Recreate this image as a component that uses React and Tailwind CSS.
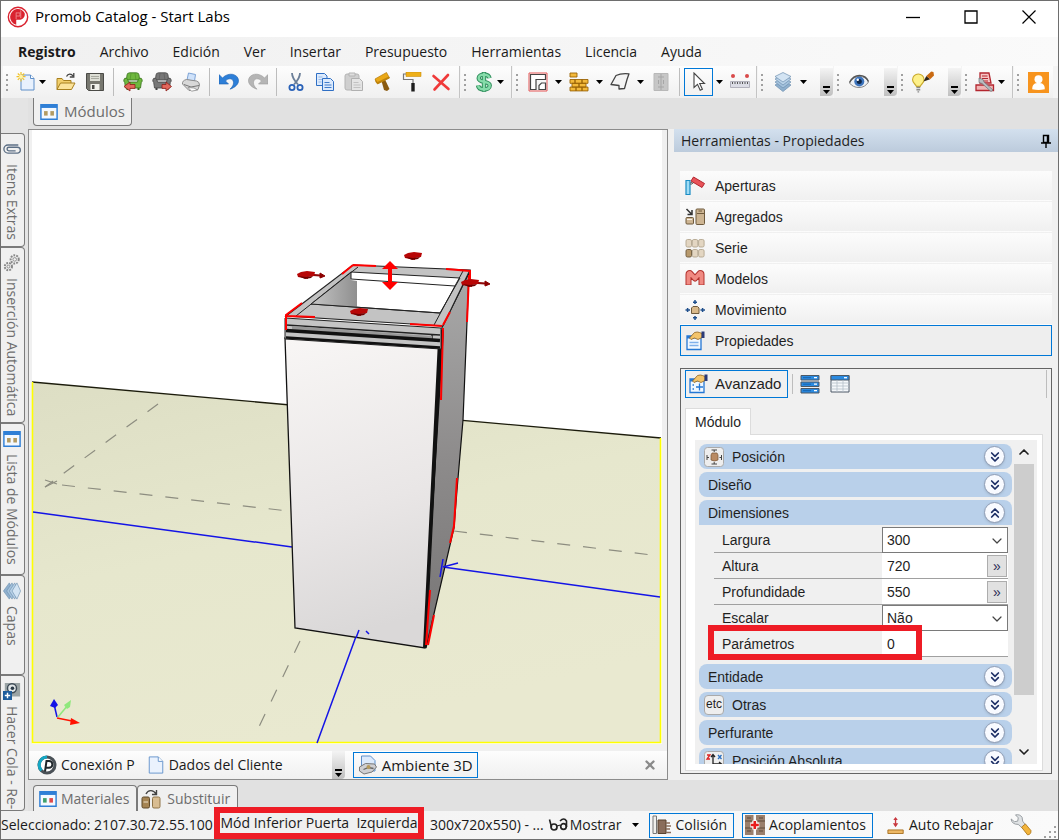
import React, { useState } from 'react';
import { ChevronDown, ChevronUp, ChevronsDown, ChevronsUp, X } from 'lucide-react';

const MENU = ['Archivo', 'Edición', 'Ver', 'Insertar', 'Presupuesto', 'Herramientas', 'Licencia', 'Ayuda'];

const Svg = ({ children, className = 'w-5 h-5' }) => (
  <svg viewBox="0 0 20 20" className={`${className} shrink-0`} fill="none" aria-hidden="true">{children}</svg>
);

/* ---------- toolbar icons ---------- */

const PromobLogo = () => (
  <Svg className="w-[22px] h-[22px]">
    <circle cx="10" cy="10" r="8.800" stroke="#d9222f" strokeWidth="1.300" fill="#fff" />
    <path d="M9 2.800a7.300 7.300 0 0 0-.6 14.300V12.500H10c5 .3 6.800-3.500 6-6.200A7.400 7.400 0 0 0 9 2.800Z" fill="#d9222f" />
    <path d="M8.300 6v6M8.300 6.300h3.500v2.800H8.300M12.500 4v7" stroke="#ee8a90" strokeWidth=".8" />
  </Svg>
);

const NewIcon = () => (
  <Svg>
    <path d="M5 3h9.500L18 6.500V18H5Z" fill="#e8f1fd" stroke="#5f8fc9" />
    <path d="M14.500 3v3.500H18" fill="#fff" stroke="#5f8fc9" />
    <path d="M5 0v9.500M.5 4.700h9M1.800 1.500l6.400 6.400M8.200 1.500 1.800 7.900" stroke="#f0c22c" strokeWidth="1.200" />
    <circle cx="5" cy="4.700" r="2" fill="#fff3a8" />
  </Svg>
);

const OpenIcon = () => (
  <Svg>
    <path d="M1 17.500V6.500h5l1.500 2H15v3" fill="#f2cf6c" stroke="#a8801e" />
    <path d="M1 17.500 4.500 11H19l-3.500 6.500Z" fill="#fbe39a" stroke="#a8801e" />
    <path d="M10.500 4.500c1.500-3 5-3 6.500-.5M17.800 1v4h-4" stroke="#444" strokeWidth="1.300" />
  </Svg>
);

const SaveIcon = () => (
  <Svg>
    <path d="M1.500 1.500h17v17h-15l-2-2Z" fill="#77776f" stroke="#4b4b47" />
    <path d="M5 2h10v7H5Z" fill="#dedfd6" />
    <path d="M6 4.500h8M6 6.500h8" stroke="#a9aaa0" />
    <path d="M5.500 12h9v6h-9Z" fill="#f1f1ec" />
    <path d="M7 13h2.500v4H7Z" fill="#4b4b47" />
  </Svg>
);

const ArmchairIcon = ({ body, dark, flip }) => (
  <Svg>
    <path d="M4 3Q4 1 6.500.8h7Q16 1 16 3l.6 5H3.400Z" fill={body} stroke={dark} strokeWidth=".8" />
    <path d="M.8 8q.4-2.300 2.600-1.800Q5 6.500 5.500 10h9q.5-3.500 2.100-3.800Q18.800 5.700 19.200 8q.2 1.500-.9 2.500L17.500 16h-15l-.8-5.500Q.6 9.500.8 8Z" fill={body} stroke={dark} strokeWidth=".8" />
    <path d="M8 1.500 7 8M12 1.500l1 6.500" stroke={dark} strokeWidth=".6" opacity=".6" />
    <path d="M3.500 16h2v2h-2ZM14.500 16h2v2h-2Z" fill={dark} />
    {flip
      ? <path d="M10 12.500h4V10l5.500 4.500-5.500 4.500v-2.600h-4Z" fill="#e2675c" stroke="#8e1f19" strokeWidth=".8" />
      : <path d="M12 12.500H7V10l-6 4.500L7 19v-2.600h5Z" fill="#e2675c" stroke="#8e1f19" strokeWidth=".8" />}
  </Svg>
);

const PrintIcon = () => (
  <Svg>
    <path d="m6 8 1.500-7 7 1.500L13.500 9Z" fill="#cfe2fa" stroke="#7ea4d6" />
    <path d="M1.500 12q-.5-3.500 4-4.500l10 1.500q3 .8 3 4l-1.500 4.500-9 1Z" fill="#d8d8d8" stroke="#8b8b8b" />
    <path d="M3 12.500 10 15l8-1.500" stroke="#777" />
    <path d="m7 15.500 6 .5 3.500 2-6 1.200Z" fill="#fff" stroke="#8b8b8b" strokeWidth=".8" />
  </Svg>
);

const UndoIcon = ({ redo }) => (
  <Svg>
    <g transform={redo ? 'matrix(-1 0 0 1 20 0)' : undefined}>
      <path d="M0 2.500v9.500h9.500L6.500 9c2.500-3.200 7.500-3 8 1.200.3 2.600-1.200 4.800-3.500 7 5-1.700 8.800-5 8.500-9C19 2 9.500-.5 3.500 6Z" fill={redo ? '#b5b5b5' : '#2d7fd8'} stroke={redo ? '#9b9b9b' : '#1c5fae'} strokeWidth=".6" />
    </g>
  </Svg>
);

const CutIcon = () => (
  <Svg>
    <path d="M6 1q0 5 6 11.500M14 1q0 5-6 11.500" stroke="#6b7f99" strokeWidth="1.800" />
    <circle cx="6" cy="15.500" r="2.600" stroke="#2a62b8" strokeWidth="1.800" />
    <circle cx="14" cy="15.500" r="2.600" stroke="#2a62b8" strokeWidth="1.800" />
  </Svg>
);

const CopyIcon = () => (
  <Svg>
    <path d="M1.500 1.500h8l2.500 2.500v9.500H1.500Z" fill="#dceafc" stroke="#2f6fc4" />
    <path d="M3.500 5h4M3.500 7.500h4M3.500 10h3" stroke="#8db4e6" strokeWidth=".9" />
    <path d="M7.500 6.500h8L18.500 9.500v9h-11Z" fill="#dceafc" stroke="#2f6fc4" />
    <path d="M9.500 10.500h5M9.500 13h7M9.500 15.500h7" stroke="#2f6fc4" strokeWidth=".9" />
  </Svg>
);

const PasteIcon = () => (
  <Svg>
    <rect x="1" y="2" width="14" height="16" rx="2" fill="#cfcfcf" stroke="#b4b4b4" />
    <path d="M5 1h6v3H5Z" fill="#dedede" stroke="#b4b4b4" />
    <path d="M7.500 6.500h8L18.500 9.500v9h-11Z" fill="#e4e4e4" stroke="#b0b0b0" />
    <path d="M9.500 10.500h5M9.500 13h7M9.500 15.500h7" stroke="#bcbcbc" strokeWidth=".9" />
  </Svg>
);

const HammerIcon = () => (
  <Svg>
    <path d="m8.500 9 3.500-1.500 4.500 9.500-2.500 2-3-1Z" fill="#8a5a10" />
    <path d="M2 7 13.500.5l3 5.500-12 6Z" fill="#eaa816" stroke="#b67b0a" strokeWidth=".7" />
    <path d="m2 7 .5 3 2 2 12-6-.5-1.500L4.500 10Z" fill="#bd820c" />
  </Svg>
);

const RollerIcon = () => (
  <Svg>
    <path d="M4 0h15v4.500H4Z" fill="#eeb01a" stroke="#c98d0c" strokeWidth=".6" />
    <path d="M4 2H1.500v5.500H11V11" stroke="#777" strokeWidth="1.200" />
    <path d="M9.300 11h3.400v8.500H9.300Z" fill="#1c1c1c" />
  </Svg>
);

const DeleteIcon = () => (
  <Svg>
    <path d="m2.500 4 15 13M17 3 3.500 17.500" stroke="#f03a3a" strokeWidth="2.600" strokeLinecap="round" />
  </Svg>
);

const MoneyIcon = () => (
  <Svg className="w-[22px] h-[22px]">
    <path d="M15 6.500C14.500 3.800 12.500 3.300 10 3.300 7.300 3.300 5.200 4.500 5.200 6.600c0 4.600 10 2 10 6.500 0 2.300-2.300 3.600-5.200 3.600-2.700 0-5-.7-5.400-3.600M10 1v18" stroke="#2f8d5b" strokeWidth="4" strokeLinejoin="round" />
    <path d="M15 6.500C14.500 3.800 12.500 3.300 10 3.300 7.300 3.300 5.200 4.500 5.200 6.600c0 4.600 10 2 10 6.500 0 2.300-2.300 3.600-5.200 3.600-2.700 0-5-.7-5.400-3.600M10 1.500v17" stroke="#86dcaa" strokeWidth="2.200" />
  </Svg>
);

const WallsIcon = () => (
  <Svg>
    <path d="M1 1h18v18H1Z" stroke="#e65656" />
    <path d="M2.500 17.500v-15h15v5H8v10Z" fill="#fff" stroke="#444" strokeWidth="1.200" />
    <path d="M11 17.500v-4l2.500-2.500h4v6.500Z" fill="#fff" stroke="#444" strokeWidth="1.200" />
  </Svg>
);

const BricksIcon = () => (
  <Svg>
    <g fill="#f3b93b" stroke="#9b6408" strokeWidth=".9">
      <path d="M1 1h7v4H1ZM1 7.500h5v3.800H1ZM6 7.500h7v3.800H6ZM13 7.500h6v3.800h-6ZM3 11.300h7v3.800H3ZM10 11.300h7v3.800h-7ZM1 15.100h6v3.800H1ZM7 15.100h6v3.800H7ZM13 15.100h6v3.800h-6Z" />
    </g>
  </Svg>
);

const FloorIcon = () => (
  <Svg>
    <path d="M6 3.500Q11 1 19 1.800L17 7.500l-2.500 9-5.500.5v-3.500L1 12.500Z" fill="#f4f4f4" stroke="#444" strokeWidth="1.300" strokeLinejoin="round" />
  </Svg>
);

const DoorsIcon = () => (
  <Svg>
    <path d="M3 1.500h14v17H3Z" fill="#c6c6c6" stroke="#b8b8b8" />
    <path d="M10 2v16M7.500 8v4M12.500 8v4M7 5h6M7 15h6" stroke="#a6a6a6" />
  </Svg>
);

const CursorIcon = () => (
  <Svg>
    <path d="M5 1v14.500l3.500-3.200 2.700 6 2.200-1-2.700-5.800h4.800Z" fill="#fff" stroke="#444" strokeWidth="1.100" />
  </Svg>
);

const RulerIcon = () => (
  <Svg>
    <circle cx="3" cy="4" r="2" fill="#d94a4a" />
    <circle cx="17" cy="4" r="2" fill="#d94a4a" />
    <path d="M.5 9.500h19v6H.5Z" fill="#dcdde6" stroke="#b2b2bd" />
    <path d="M2.500 10v2M5 10v2M7.500 10v2M10 10v2M12.500 10v2M15 10v2M17.500 10v2" stroke="#555" />
  </Svg>
);

const LayersIcon = () => (
  <Svg>
    <g stroke="#6d8fb0" strokeWidth=".7">
      <path d="m10 8.500 8 4.500-8 6.500L2 13Z" fill="#8fb0ce" />
      <path d="m10 5.500 8 4.500-8 6L2 10Z" fill="#a4c2dc" />
      <path d="m10 3 8 4-8 6-8-6Z" fill="#b9d2e8" />
      <path d="m10 .5 8 4-8 5.500-8-5.500Z" fill="#d3e4f3" />
    </g>
  </Svg>
);

const EyeIcon = () => (
  <Svg>
    <path d="M.5 11Q4 4.500 10.500 4.500T19.500 10Q16 15.500 10 15.500T.5 11Z" fill="#eef1f5" stroke="#888" />
    <circle cx="10.300" cy="9.500" r="5" fill="#3d74bd" />
    <circle cx="10.300" cy="9.500" r="2.500" fill="#0f2748" />
    <circle cx="8.800" cy="7.700" r="1.200" fill="#fff" />
    <path d="M.5 10.500Q4 3.500 10.500 3.500t9 6" stroke="#555" strokeWidth="1.400" />
  </Svg>
);

const BulbIcon = () => (
  <Svg className="w-[22px] h-[22px]">
    <path d="M4 14C3.500 12 .5 11 .5 8A5 5 0 0 1 11 8c0 3-3 4-3.500 6Z" fill="#fdf08a" stroke="#c9a92c" />
    <path d="M4 15h3.500M4 17h3.500M5 19h1.500" stroke="#8a8a8a" strokeWidth="1.300" />
    <path d="M10.500 9.500 13 4.500l3.500 3Z" fill="#2d2418" />
    <path d="m13 4.500 4.500-4 2 .5.500 3-3.500 3.500Z" fill="#c96a12" />
  </Svg>
);

const StampIcon = () => (
  <Svg>
    <path d="M5 1h9l2 10H5Z" fill="#f6c5c5" stroke="#b3262f" strokeWidth="1.300" />
    <path d="M7 4h5.500M7 6.500h6M7 9h6" stroke="#b3262f" />
    <path d="M1 13h17.500v5.500H1Z" fill="#f0b4b4" stroke="#b3262f" strokeWidth="1.300" />
    <path d="m4 6 4 1.500 1 2.500 9 8-2 1.500-9-8-3-1Z" fill="#b8bcc0" stroke="#6f7478" strokeWidth=".7" />
  </Svg>
);

const UserIcon = () => (
  <Svg className="w-[21px] h-[21px]">
    <path d="M0 0h20v20H0Z" fill="#f7941e" />
    <circle cx="10" cy="7" r="3.800" fill="#fff" />
    <path d="M4 16.500c0-5 2.500-6 6-6s6 1 6 6q-6 1.500-12 0Z" fill="#fff" />
  </Svg>
);

/* ---------- panel icons ---------- */

const ModulesIcon = ({ a = '#b39b62', b = '#b39b62' }) => (
  <Svg className="w-[18px] h-[18px]">
    <path d="M1 2h18v16H1Z" fill="#f4f9ff" stroke="#2f7fd6" strokeWidth="1.600" />
    <path d="M1 2h18v3.500H1Z" fill="#2f7fd6" />
    <path d="M4.500 9h4v5h-4Z" fill={a} />
    <path d="M11.500 9h4v5h-4Z" fill={b} />
  </Svg>
);

const ClipIcon = () => (
  <Svg className="w-[18px] h-[18px]">
    <path d="M17 5.500H5.500a4.500 4.500 0 0 0 0 9H16a3 3 0 0 0 0-6.500H6.500a2 2 0 0 0 0 4H14" stroke="#5c6f85" strokeWidth="1.500" />
  </Svg>
);

const GearsIcon = () => (
  <Svg className="w-[18px] h-[18px]">
    <circle cx="13" cy="6" r="4.500" stroke="#888" strokeWidth="2.200" strokeDasharray="2 1.200" />
    <circle cx="13" cy="6" r="2" stroke="#888" />
    <circle cx="6" cy="14" r="4" stroke="#888" strokeWidth="2.200" strokeDasharray="2 1.200" />
    <circle cx="6" cy="14" r="1.600" stroke="#888" />
  </Svg>
);

const TurnedLayersIcon = () => (
  <Svg className="w-[18px] h-[18px]">
    <g transform="rotate(90 10 10)" stroke="#6d8fb0" strokeWidth=".7">
      <path d="m10 8.500 9 4.500-9 6.500L1 13Z" fill="#8fb0ce" />
      <path d="m10 5.500 9 4.500-9 6L1 10Z" fill="#a4c2dc" />
      <path d="m10 3 9 4-9 6-9-6Z" fill="#b9d2e8" />
      <path d="m10 .5 9 4-9 5.500-9-5.500Z" fill="#d3e4f3" />
    </g>
  </Svg>
);

const GlueIcon = () => (
  <Svg className="w-[18px] h-[18px]">
    <path d="M2 1h17v15H2Z" fill="#9aa3a5" />
    <circle cx="10" cy="7" r="5" fill="#e1e6e8" stroke="#3e4b57" strokeWidth="1.600" />
    <circle cx="10.500" cy="7" r="2" fill="#2a3948" />
    <path d="M0 10h10v10H0Z" fill="#1d5c9c" />
    <path d="M5 12v6M2 15h6" stroke="#fff" strokeWidth="1.600" />
  </Svg>
);

const OpeningsIcon = () => (
  <Svg>
    <path d="M1 4.500h4v14H1Z" fill="#9fdcf5" stroke="#1a8cc4" strokeWidth="1.200" />
    <path d="m8.500 1 11 6.500-2.500 4-11-6.500Z" fill="#e8545a" stroke="#b3262f" />
    <path d="M6 9V6M8 8 6.500 6" stroke="#555" />
  </Svg>
);

const AggregatesIcon = () => (
  <Svg>
    <path d="m1.500 2 5 5M7 3v4.500H2.500" stroke="#333" strokeWidth="1.500" />
    <rect x="1" y="10.500" width="7.500" height="6.500" rx="1" fill="#cdb593" stroke="#6e5a3d" />
    <path d="M2 12.500h5" stroke="#fff" strokeWidth=".8" />
    <rect x="11" y="2" width="8.500" height="15.500" rx="1" fill="#cdb593" stroke="#6e5a3d" />
    <path d="M12 6.500h7M13.500 4h3.500" stroke="#6e5a3d" />
  </Svg>
);

const SeriesIcon = () => (
  <Svg>
    <g fill="#e3d6c2" stroke="#b3a68f" strokeWidth=".9">
      <rect x="1" y="1.500" width="5.500" height="7.500" rx="1.500" />
      <rect x="7.300" y="1.500" width="5.500" height="7.500" rx="1.500" />
      <rect x="13.600" y="1.500" width="5.500" height="7.500" rx="1.500" />
      <rect x="7.300" y="11.500" width="5.500" height="7.500" rx="1.500" />
      <rect x="13.600" y="11.500" width="5.500" height="7.500" rx="1.500" />
    </g>
    <rect x="1" y="11.500" width="5.500" height="7.500" rx="1.500" fill="#b89a6d" stroke="#6e5a3d" strokeWidth=".9" />
  </Svg>
);

const ModelsIcon = () => (
  <Svg>
    <path d="M3.500 16V5.500q0-1.500 1.500-1.500L10 9.500 15 4q1.500 0 1.500 1.500V16" stroke="#b3322e" strokeWidth="6" strokeLinejoin="round" />
    <path d="M3.500 15.500V5.500q0-1.500 1.500-1.500L10 9.500 15 4q1.500 0 1.500 1.500v10" stroke="#f08a82" strokeWidth="4" strokeLinejoin="round" />
  </Svg>
);

const MoveIcon = () => (
  <Svg>
    <path d="M6.500 8 8 6.500h4.500L14 8v5.500H6.500Z" fill="#d9b98a" stroke="#6e5a3d" />
    <path d="M10 0v4M8 2.200h4M10 16v4M8 17.800h4M.5 10H5M2.600 8v4M15.500 10H20M17.600 8v4" stroke="#1f4f8c" strokeWidth="1.500" />
  </Svg>
);

const PropertiesIcon = ({ plus }) => (
  <Svg>
    <path d="M2 5h14v13.500H2Z" fill="#f2f8ff" stroke="#2577d4" strokeWidth="1.300" />
    <path d="M2 5h8v2.500H2Z" fill="#2577d4" />
    {plus
      ? <path d="M4.500 11h1.500M4.500 15h1.500M11.500 9.500v7M8 13h7" stroke="#2577d4" strokeWidth="1.300" />
      : <path d="M4.500 11.500h9M4.500 14.500h9" stroke="#7fb0ea" strokeWidth="1.300" />}
    <path d="m4.500 7 5-5.500q3-1 5 0l2.500 1v4L13 8.500 9.500 7 6 8.500Z" fill="#f3c46b" stroke="#8c5f1e" strokeWidth=".8" />
    <path d="M16.500.5h3V7h-3Z" fill="#2b3a78" />
  </Svg>
);

const RowsIcon = () => (
  <Svg>
    <g fill="#2a8ae0" stroke="#4c5966">
      <path d="M1 1.500h18v4.500H1ZM1 8h18v4.500H1ZM1 14.500h18V19H1Z" />
    </g>
    <path d="M3 3.700h8M3 10.200h8M3 16.700h8" stroke="#1563ae" />
    <path d="M14 3.700h3M14 10.200h3M14 16.700h3" stroke="#fff" strokeWidth="1.300" />
  </Svg>
);

const TableIcon = () => (
  <Svg>
    <path d="M1 1.500h18v16.500H1Z" fill="#f5f8fb" stroke="#4c5966" />
    <path d="M1 1.500h18V6H1Z" fill="#2a8ae0" stroke="#4c5966" />
    <path d="M7 6v12M13 6v12M1 9h18M1 12h18M1 15h18" stroke="#b4bec8" strokeWidth=".8" />
    <path d="M14 3.700h3" stroke="#fff" strokeWidth="1.300" />
  </Svg>
);

const PositionIcon = () => (
  <Svg>
    <rect x=".5" y=".5" width="19" height="19" rx="3" fill="#eee" stroke="#aaa" />
    <path d="M7 8 8 6h5l1 2v5q-3.500 2-7 0Z" fill="#b98a62" stroke="#7a5435" strokeWidth=".7" />
    <path d="M7.500 3h5.500M10.200 3v2M7.500 17H13M10.200 17v-2M3 8v5M3 10.500h2M17.500 8v5M17.500 10.500h-2" stroke="#444" />
  </Svg>
);

const AbsoluteIcon = () => (
  <Svg>
    <rect x=".5" y=".5" width="19" height="19" rx="3" fill="#eee" stroke="#aaa" />
    <path d="M9 13V4M7 6l2-2.500L11 6M9 13h8M15 11l2.500 2-2.500 2M9 13l-5 5" stroke="#222" strokeWidth="1.300" />
    <path d="M3 4h3L3 8h3" stroke="#d22" strokeWidth="1.300" />
    <path d="m14 4 3.500 4M17.500 4 14 8" stroke="#2a6fc0" strokeWidth="1.300" />
  </Svg>
);

const ConnectLogo = () => (
  <Svg>
    <circle cx="10" cy="10" r="8" fill="#fff" stroke="#4a5157" strokeWidth="3" />
    <path d="M10 2a8 8 0 0 0-5.500 13.500" stroke="#14a7c4" strokeWidth="3" />
    <path d="M8 16.500 9.500 6h2.500a3.200 3.200 0 0 1 0 6.800H8.700" stroke="#20272c" strokeWidth="2" />
  </Svg>
);

const PageIcon = () => (
  <Svg className="w-[18px] h-[18px]">
    <path d="M2.500 1h10L17.500 6v13h-15Z" fill="#eaf2fd" stroke="#5f8fc9" />
    <path d="M12.500 1v5h5" fill="#fff" stroke="#5f8fc9" />
  </Svg>
);

const SceneIcon = () => (
  <Svg>
    <path d="M3.500 1h9L17 5.500V16H3.500Z" fill="#dceafc" stroke="#5f8fc9" />
    <path d="m1.500 12 6-3.500 9 .5 2 3-4.500 5-8 2-4.500-3Z" fill="#cfcfd2" stroke="#777" />
    <path d="m5.500 14.500 5-2 5 1" stroke="#666" strokeWidth="1.300" />
    <circle cx="10.500" cy="12" r="2" fill="#b59a5c" />
  </Svg>
);

const SwapIcon = () => (
  <Svg>
    <path d="M5 5c2-4 7-5 10 0M15.500 1v4.500H11" stroke="#444" strokeWidth="1.400" />
    <rect x="1" y="8" width="7.500" height="11" rx="1.500" fill="#a58453" stroke="#5f4a2b" />
    <path d="M2.500 13h4.500" stroke="#efe2cb" />
    <rect x="11.500" y="8" width="7.500" height="11" rx="1.500" fill="#d9bd92" stroke="#8f7448" />
  </Svg>
);

const GlassesIcon = () => (
  <Svg>
    <path d="M1.500 4.500 3.500 12M12 6q4-4 6.500 0v6" stroke="#222" strokeWidth="1.600" />
    <circle cx="6" cy="12" r="3" stroke="#222" strokeWidth="1.700" />
    <circle cx="15.500" cy="11.500" r="2.800" stroke="#222" strokeWidth="1.700" />
    <path d="m9 11 3.500-1" stroke="#222" strokeWidth="1.300" />
  </Svg>
);

const CollisionIcon = () => (
  <Svg>
    <path d="M1 1h3.500v17.500H1Z" fill="#f0efec" stroke="#777" />
    <path d="M6 5h8v13.500H6Z" fill="#8a6d5b" stroke="#59432f" />
    <path d="M14 8h4M14 11h5M14 14h4M14 17.500h5" stroke="#8a6d5b" strokeWidth="1.300" />
  </Svg>
);

const CouplingIcon = () => (
  <Svg>
    <path d="M0 0h8.500v20H0ZM11 0h9v20h-9Z" fill="#9a7f6c" />
    <path d="M0 6h8M0 13h8M12 6h8M12 13h8M2 3h4M14 3h4M2 16h4M14 16h4" stroke="#5f4a38" strokeWidth="1.100" />
    <path d="M9.800 5.500v9M5.300 10h9" stroke="#fff" strokeWidth="5" />
    <path d="M9.800 6v8M5.800 10h8" stroke="#e81c1c" strokeWidth="2.600" />
  </Svg>
);

const LowerIcon = () => (
  <Svg className="w-[18px] h-[18px]">
    <path d="M9.500 1 12 4.500H7ZM9.500 12.500 6.500 8h6Z" fill="#c8383f" />
    <path d="M9.500 3v8" stroke="#c8383f" strokeWidth="1.500" />
    <path d="M1 15.500h17v4H1Z" fill="#edb865" stroke="#a56d1d" />
  </Svg>
);

const WrenchIcon = () => (
  <Svg className="w-[22px] h-[22px]">
    <path d="M1 4.500 4 7l3-.5.5-3L5 .8q4-.8 6 2.200l.5 3.500 3 4-3 2.500-4-3.500Q1.500 9.500 1 4.500Z" fill="#dfe2e4" stroke="#8f959a" strokeWidth=".8" />
    <path d="m10.500 12 3.500-3 5 6q.5 3.500-3 4Z" fill="#f2b43c" stroke="#b0791a" strokeWidth=".8" />
  </Svg>
);

/* ---------- toolbar parts ---------- */

const Grip = () => (
  <span className="w-2.5 flex flex-col gap-[3px] pl-[3px] shrink-0">
    {[0, 1, 2, 3].map(i => <span key={i} className="w-0.5 h-0.5 bg-[#a0a0a0]" />)}
  </span>
);

const Caret = () => (
  <svg viewBox="0 0 7 4" className="w-[7px] h-1" aria-hidden="true"><path d="M0 0h7L3.500 4Z" fill="#000" /></svg>
);

const Separator = () => <span className="w-[9px] flex justify-center shrink-0"><span className="w-px h-7 bg-[#bdbdbd]" /></span>;

const Tool = ({ label, tight, active, children }) => (
  <button type="button" aria-label={label}
    className={`${tight ? 'w-[26px]' : 'w-[29px]'} h-7 flex items-center justify-center shrink-0 border ${active ? 'border-[#0078d7]' : 'border-transparent'}`}>
    {children}
  </button>
);

const More = ({ label, tight }) => (
  <button type="button" aria-label={label} className={`w-3 h-7 flex items-center shrink-0 ${tight ? 'justify-start' : 'justify-center'}`}>
    <Caret />
  </button>
);

const Overflow = ({ label }) => (
  <button type="button" aria-label={label} className="ml-auto w-[13px] h-7 flex flex-col items-center justify-end gap-0.5 pb-0.5 rounded-br bg-gradient-to-b from-[#f4f4f4] to-[#c0c0c0] shrink-0">
    <span className="w-[7px] h-0.5 bg-black" />
    <Caret />
  </button>
);

const Group = ({ className = '', children }) => (
  <div className={`flex items-center h-8 mr-px shrink-0 bg-gradient-to-b from-[#fdfdfd] to-[#f0f0f0] ${className}`}>
    <Grip />
    {children}
  </div>
);

const Toolbar = () => (
  <div className="flex h-8 pl-0.5 bg-[#f4f4f4] overflow-hidden">
    <Group className="pr-1 border-r border-[#c4c4c4]">
      <Tool label="Nuevo" tight><NewIcon /></Tool>
      <More label="Opciones de nuevo" tight />
      <Tool label="Abrir"><OpenIcon /></Tool>
      <Tool label="Guardar"><SaveIcon /></Tool>
      <Separator />
      <Tool label="Importar"><ArmchairIcon body="#6fb83f" dark="#35701b" /></Tool>
      <Tool label="Exportar"><ArmchairIcon body="#777" dark="#444" flip /></Tool>
      <Tool label="Imprimir"><PrintIcon /></Tool>
      <Separator />
      <Tool label="Deshacer"><UndoIcon /></Tool>
      <Tool label="Rehacer"><UndoIcon redo /></Tool>
      <Separator />
      <Tool label="Cortar"><CutIcon /></Tool>
      <Tool label="Copiar"><CopyIcon /></Tool>
      <Tool label="Pegar"><PasteIcon /></Tool>
      <Tool label="Martillo"><HammerIcon /></Tool>
      <Tool label="Pintar"><RollerIcon /></Tool>
      <Tool label="Eliminar"><DeleteIcon /></Tool>
    </Group>
    <Group className="pr-0.5 border-r border-[#c4c4c4]">
      <Tool label="Precio" tight><MoneyIcon /></Tool>
      <More label="Opciones de precio" tight />
    </Group>
    <Group className="pr-0.5 border-r border-[#c4c4c4]">
      <Tool label="Paredes"><WallsIcon /></Tool>
      <More label="Opciones de paredes" />
      <Tool label="Ladrillos"><BricksIcon /></Tool>
      <More label="Opciones de ladrillos" />
      <Tool label="Piso"><FloorIcon /></Tool>
      <More label="Opciones de piso" />
      <Tool label="Puertas"><DoorsIcon /></Tool>
      <Separator />
      <Tool label="Seleccionar" active><CursorIcon /></Tool>
      <More label="Opciones de selección" />
      <Tool label="Medir"><RulerIcon /></Tool>
    </Group>
    <Group className="w-[75px]">
      <Tool label="Capas"><LayersIcon /></Tool>
      <More label="Opciones de capas" />
      <Overflow label="Más capas" />
    </Group>
    <Group className="w-[63px]">
      <Tool label="Visualizar"><EyeIcon /></Tool>
      <Overflow label="Más vistas" />
    </Group>
    <Group className="w-[63px]">
      <Tool label="Iluminación"><BulbIcon /></Tool>
      <Overflow label="Más luces" />
    </Group>
    <Group className="pr-0.5 border-r border-[#c4c4c4]">
      <Tool label="Render" tight><StampIcon /></Tool>
      <More label="Opciones de render" tight />
    </Group>
    <Group>
      <Tool label="Usuario"><UserIcon /></Tool>
    </Group>
  </div>
);

/* ---------- left tabs ---------- */

const SIDE_TABS = [
  { label: 'Itens Extras', icon: <ClipIcon />, size: 'h-[114px]' },
  { label: 'Inserción Automática', icon: <GearsIcon />, size: 'h-[176px]' },
  { label: 'Lista de Módulos', icon: <ModulesIcon />, size: 'h-[152px]' },
  { label: 'Capas', icon: <TurnedLayersIcon />, size: 'h-[100px]' },
  { label: 'Hacer Cola - Re-', icon: <GlueIcon />, size: 'flex-1' },
];

const SideTabs = () => (
  <nav className="w-[27px] shrink-0 flex flex-col pt-[35px] pr-[3px] bg-[#e4e4e4]">
    {SIDE_TABS.map(t => (
      <button key={t.label} type="button"
        className={`${t.size} w-6 pr-0.5 flex flex-col items-center gap-1.5 pt-1.5 overflow-hidden bg-[#f0f0f0] border-t border-r border-b border-[#7a7a7a] rounded-r text-[14px] leading-5 text-[#6d6d6d]`}>
        {t.icon}
        <span className="[writing-mode:vertical-rl] whitespace-nowrap">{t.label}</span>
      </button>
    ))}
  </nav>
);

/* ---------- 3D scene ---------- */

const Knob = ({ x, y, tail }) => (
  <g>
    {tail && <path d={`M${x} ${y - 1}l${tail - 5} 1v-2l5 3-5 2v-2l${5 - tail} -1Z`} fill="#8c0000" stroke="#8c0000" />}
    <path d={`M${x - 9} ${y - 1}l4-2 6-1 8 1-1 4-6 1v2l-5-1-5-1Z`} fill="#b80606" />
    <path d={`M${x - 8} ${y + 1}l8 1 7-1-2 2-6 1Z`} fill="#6d0000" />
  </g>
);

const Scene = () => (
  <svg viewBox="30 130 632 614" className="block w-full bg-white" role="img" aria-label="Módulo inferior en el ambiente 3D">
    <defs>
      <linearGradient id="floor" x1="0" y1="0" x2=".4" y2="1">
        <stop offset="0" stopColor="#dddec4" />
        <stop offset=".5" stopColor="#e6e7cd" />
        <stop offset="1" stopColor="#e9e9d0" />
      </linearGradient>
      <linearGradient id="door" x1="0" y1="0" x2=".15" y2="1">
        <stop offset="0" stopColor="#f8f6f5" />
        <stop offset=".6" stopColor="#e9e6e6" />
        <stop offset="1" stopColor="#dad8d8" />
      </linearGradient>
      <linearGradient id="side" x1="0" y1="0" x2="0" y2="1">
        <stop offset="0" stopColor="#a9a9a9" />
        <stop offset=".5" stopColor="#8d8b8b" />
        <stop offset="1" stopColor="#767474" />
      </linearGradient>
      <linearGradient id="inner" x1="0" y1="0" x2="1" y2="0">
        <stop offset="0" stopColor="#c6c6c6" />
        <stop offset="1" stopColor="#8f8f8f" />
      </linearGradient>
    </defs>

    <path d="M30 130h2v614h-2Z" fill="#f0f0f0" />
    <path d="M32 382 661 438V743H32Z" fill="url(#floor)" />
    <path d="M32 382 661 438" stroke="#1c1c0c" strokeWidth="1.300" />
    <path d="M32.500 382V742.500H660.500V438" fill="none" stroke="#ff0" strokeWidth="1.600" />

    {/* guides on the floor */}
    <g stroke="#8d8d80" strokeWidth="1.200" fill="none">
      <path d="M158 404 45 487" strokeDasharray="13 13" />
      <path d="M62 485 288 511" strokeDasharray="13 13" />
      <path d="M454 531 660 556" strokeDasharray="13 13" />
      <path d="M300 641 257 731" strokeDasharray="13 14" />
      <path d="M45 480 57 484M45 487 57 481" />
    </g>
    <g stroke="#1414e6" strokeWidth="1.500" fill="none">
      <path d="M33 512 292 547M443 567 660 597M358 631 317 743" />
    </g>

    {/* side panel */}
    <path d="M442 327 469 273 463 420 457 490 454 528 426 648Z" fill="url(#side)" stroke="#111" strokeWidth="1.200" />
    <path d="M469 275 467 322M457 478 454 526 450 543M434 615 428 645" stroke="#f00" strokeWidth="2" fill="none" />

    {/* door */}
    <path d="M285 338 441 348 425 648 295 628Z" fill="url(#door)" stroke="#111" strokeWidth="1.300" />
    <path d="M441 330h3L430 560 426 648h-3L438 340Z" fill="#111" />
    <path d="M443 328 441 400M430 590 426 645" stroke="#f00" strokeWidth="2" />

    {/* open top */}
    <path d="M353 265 470 270 443 326 286 316Z" fill="#c3c3c3" stroke="#222" strokeWidth="1.200" />
    <path d="M351 272 460 278 440 313 311 304Z" fill="#fff" stroke="#222" />
    <path d="M351 279 455 286" stroke="#222" />
    <path d="M351 273v7l6 1v26l-46-3Z" fill="url(#inner)" />
    <path d="M358 267 296 316M463 271 434 325M351 272v7M311 304 440 313" stroke="#222" fill="none" />

    {/* front profiles */}
    <path d="M285 318 441 328V349L285 339Z" fill="#c4c4c4" stroke="#222" />
    <path d="M286 325 440 335M432 335v4" stroke="#222" strokeWidth="1.400" />
    <path d="M292 326 432 336V339L292 330Z" fill="#989898" />
    <path d="M286 330.500 440 340.500" stroke="#111" strokeWidth="3.500" />
    <path d="M286 337.500 440 347.500" stroke="#111" strokeWidth="2.500" />
    <path d="M353 265 376 266M446 269 470 271V282M353 265 342 274M302 303 286 315V330M287 316 315 317M410 324 442 326M443 325 450 312" stroke="#f00" strokeWidth="2" fill="none" />

    {/* blue contact marks */}
    <path d="M443 559 440 577M443 567 458 563M356 638 359 630M366 631 369 634" stroke="#1414e6" strokeWidth="1.500" />

    {/* drag handles */}
    <Knob x={306} y={275} tail={19} />
    <Knob x={413} y={256} />
    <Knob x={359} y={312} />
    <Knob x={470} y={283} tail={20} />
    <path d="M390 261 398 269H392V282H398L390 290 382 282H388V269H382Z" fill="#f00" />

    {/* axes */}
    <path d="M57 717 54 704" stroke="#1414e6" strokeWidth="1.500" />
    <path d="m54 699 4 6-3 3-5-2Z" fill="#1414e6" />
    <path d="M58 717 68 705" stroke="#8fe87c" strokeWidth="1.500" />
    <path d="m71 700-1 7-3 2-3-4Z" fill="#8fe87c" />
    <path d="M57 718 72 721" stroke="#f10" strokeWidth="1.500" />
    <path d="m71 718 9 5-10 2Z" fill="#f10" />
  </svg>
);

const Viewport = () => (
  <section className="flex-1 min-w-0 flex flex-col bg-[#f0f0f0] border border-[#8c8c8c]">
    <div className="pl-px pr-[5px]"><Scene /></div>
    <div className="h-[35px] mt-auto flex items-end">
      <div className="h-7 flex-1 flex items-center bg-gradient-to-b from-[#fdfdfd] to-[#f0f0f0] text-[14px] leading-5 text-[#1a1a1a]">
        <button type="button" className="flex items-center gap-1 pl-2"><ConnectLogo />Conexión P</button>
        <button type="button" className="flex items-center gap-1 pl-3"><PageIcon />Dados del Cliente</button>
        <span className="w-12 mr-px" />
        <span className="flex"><Overflow label="Más documentos" /></span>
        <button type="button" className="ml-2 h-[26px] px-1 flex items-center gap-1 border border-[#0078d7] text-[15px]"><SceneIcon />Ambiente 3D</button>
        <button type="button" aria-label="Cerrar ambiente" className="ml-auto mr-2.5"><X className="w-3.5 h-3.5 text-[#8a8a8a]" strokeWidth={4} /></button>
      </div>
    </div>
  </section>
);

/* ---------- properties panel ---------- */

const TOOLS = [
  { label: 'Aperturas', icon: <OpeningsIcon /> },
  { label: 'Agregados', icon: <AggregatesIcon /> },
  { label: 'Serie', icon: <SeriesIcon /> },
  { label: 'Modelos', icon: <ModelsIcon /> },
  { label: 'Movimiento', icon: <MoveIcon /> },
  { label: 'Propiedades', icon: <PropertiesIcon /> },
];

const Expander = ({ label, icon, open, children }) => (
  <div>
    <button type="button" aria-expanded={!!open}
      className={`w-full h-[25px] pl-[9px] pr-[7px] flex items-center gap-2 bg-[#b9d0ea] ${open ? 'rounded-t-lg' : 'rounded-lg'}`}>
      {icon && <span className="-ml-1">{icon}</span>}
      <span>{label}</span>
      <span className="ml-auto w-[21px] h-[21px] rounded-full bg-[#f8faff] border border-[#8f9db5] shadow flex items-center justify-center text-[#1d2f66]">
        {open ? <ChevronsUp className="w-4 h-4" strokeWidth={2.5} /> : <ChevronsDown className="w-4 h-4" strokeWidth={2.5} />}
      </span>
    </button>
    {children}
  </div>
);

const Field = ({ id, label, value, type, options, marked }) => (
  <div className="relative h-[26px] flex items-center border-b border-[#a0a0a0]">
    <label htmlFor={id} className="w-[168px] pl-2 shrink-0">{label}</label>
    {type === 'select' ? (
      <span className="relative flex-1 min-w-0 h-[26px]">
        <select id={id} defaultValue={value} className="appearance-none w-full h-full pl-1 bg-white border border-[#7a7a7a] outline-none">
          {options.map(o => <option key={o}>{o}</option>)}
        </select>
        <ChevronDown className="absolute right-[3px] top-1.5 w-4 h-4 text-[#444] pointer-events-none" strokeWidth={1.8} />
      </span>
    ) : (
      <input id={id} defaultValue={value} className="flex-1 min-w-0 h-[25px] pl-[5px] bg-white outline-none" />
    )}
    {type === 'more' && (
      <span className="bg-white h-[25px] pr-px flex items-center">
        <button type="button" aria-label={`Editar ${label}`} className="w-5 h-[22px] flex items-center justify-center bg-[#e1e1e1] border border-[#adadad] text-[#2b2b55]">»</button>
      </span>
    )}
    {marked && <span className="absolute -left-1.5 -top-1.5 -bottom-1 w-[214px] border-[6px] border-[#ee1c25] pointer-events-none" />}
  </div>
);

const PropertiesPanel = () => {
  const [tool, setTool] = useState('Propiedades');

  return (
    <aside className="w-[390px] shrink-0 pl-1.5 flex flex-col bg-[#f0f0f0] font-['Liberation_Sans',Arial,sans-serif] text-[14px] leading-5 text-[#1f1f1f]">
      <h2 className="h-[23px] pl-[7px] pr-1.5 flex items-center justify-between bg-gradient-to-b from-[#d3e0ee] to-[#bccbdc] font-['Open_Sans',sans-serif]">
        Herramientas - Propiedades
        <button type="button" aria-label="Fijar panel">
          <svg viewBox="0 0 12 14" className="w-3 h-3.5" fill="none"><path d="M3.500 1.500h5v7h-5ZM7.500 1.500v7M1 9h10M6 9v5" stroke="#000" strokeWidth="1.400" /></svg>
        </button>
      </h2>
      <div className="mt-[18px] mx-1.5 flex flex-col">
        {TOOLS.map(t => (
          <button key={t.label} type="button" onClick={() => setTool(t.label)}
            className={`h-[31px] px-1 flex items-center gap-2.5 border ${tool === t.label ? 'border-[#0078d7] bg-[#eeeeee]' : 'border-transparent bg-gradient-to-b from-[#fcfcfc] to-[#f0f0f0]'}`}>
            {t.icon}
            {t.label}
          </button>
        ))}
      </div>

      <div className="mt-3 mx-1.5 mb-1.5 px-1 pb-0.5 border border-[#646464]">
        <div className="h-8 pt-px flex items-start">
          <button type="button" className="h-7 pl-0.5 pr-1.5 flex items-center gap-[7px] border border-[#0078d7] text-[15px]">
            <PropertiesIcon plus />
            Avanzado
          </button>
          <div className="h-7 flex-1 flex items-center gap-2.5 border-r border-[#bdbdbd]">
            <span className="w-px h-5 ml-1 -mr-[3px] bg-[#bdbdbd]" />
            <button type="button" aria-label="Vista en filas"><RowsIcon /></button>
            <button type="button" aria-label="Vista en tabla"><TableIcon /></button>
          </div>
        </div>
        <div className="mt-[7px] mr-1">
          <div className="flex">
            <button type="button" className="h-[27px] -mb-px px-[9px] relative bg-white border border-b-0 border-[#dcdcdc]">Módulo</button>
          </div>
          <div className="bg-white border border-[#dcdcdc] pl-[9px] pr-[5px] pt-[5px] pb-1.5">
            <div className="h-[324px] pl-1 pt-1 pr-[3px] flex gap-0.5 overflow-hidden bg-[#f0f0f0]">
              <div className="flex-1 min-w-0 flex flex-col gap-[3px]">
                <Expander label="Posición" icon={<PositionIcon />} />
                <Expander label="Diseño" />
                <Expander label="Dimensiones" open>
                  <div className="pt-0.5 pb-1 pl-[15px] pr-1">
                    <Field id="largura" label="Largura" value="300" type="select" options={['300', '350', '400']} />
                    <Field id="altura" label="Altura" value="720" type="more" />
                    <Field id="profundidade" label="Profundidade" value="550" type="more" />
                    <Field id="escalar" label="Escalar" value="Não" type="select" options={['Não', 'Sim']} />
                    <Field id="parametros" label="Parámetros" value="0" marked />
                  </div>
                </Expander>
                <Expander label="Entidade" />
                <Expander label="Otras" icon={<span className="block w-5 h-5 rounded-sm bg-[#eee] border border-[#aaa] text-[12px] leading-4 text-center">etc</span>} />
                <Expander label="Perfurante" />
                <Expander label="Posición Absoluta" icon={<AbsoluteIcon />} />
              </div>
              <div className="w-5 -mt-1 h-[324px] flex flex-col shrink-0">
                <button type="button" aria-label="Subir" className="h-6 shrink-0 flex items-center justify-center"><ChevronUp className="w-4 h-4" strokeWidth={2.5} /></button>
                <div className="h-[231px] bg-[#cdcdcd]" />
                <button type="button" aria-label="Bajar" className="mt-auto h-6 flex items-center justify-center"><ChevronDown className="w-4 h-4" strokeWidth={2.5} /></button>
              </div>
            </div>
          </div>
        </div>
      </div>
    </aside>
  );
};

/* ---------- status bar ---------- */

const StatusBar = () => (
  <footer className="h-7 flex items-center bg-gradient-to-r from-[#f0f0f0] to-[#fafafa] text-[14px] leading-5 text-[#1a1a1a] whitespace-nowrap">
    <span className="w-[213px] shrink-0">Seleccionado: 2107.30.72.55.100</span>
    <span className="h-8 -mt-1 shrink-0 w-[210px] flex items-center justify-center border-[6px] border-[#ee1c25] bg-[#f0f0f0]">Mód Inferior Puerta&nbsp; Izquierda</span>
    <span className="ml-1.5">300x720x550) - ...</span>
    <button type="button" className="ml-1 mr-2.5 flex items-center gap-0.5"><GlassesIcon />Mostrar<span className="ml-2"><Caret /></span></button>
    <button type="button" className="h-[25px] pl-0.5 pr-1.5 flex items-center gap-1 border border-[#0078d7]"><CollisionIcon />Colisión</button>
    <button type="button" className="ml-2 h-[25px] pl-0.5 pr-1.5 flex items-center gap-1 border border-[#0078d7]"><CouplingIcon />Acoplamientos</button>
    <button type="button" className="ml-3.5 flex items-center gap-1"><LowerIcon />Auto Rebajar</button>
    <button type="button" aria-label="Configuración" className="ml-auto"><WrenchIcon /></button>
    <svg viewBox="0 0 14 14" className="w-3.5 h-3.5 ml-3 self-end" aria-hidden="true">
      <path d="M10 1h2v2h-2ZM5 6h2v2H5ZM10 6h2v2h-2ZM0 11h2v2H0ZM5 11h2v2H5ZM10 11h2v2h-2Z" fill="#a0a0a0" />
    </svg>
  </footer>
);

const App = () => (
  <div className="min-h-screen flex flex-col border border-[#6e6e6e] bg-[#e1e1e1] font-['Open_Sans','Noto_Sans',sans-serif] overflow-hidden">
    <header className="h-9 pb-[5px] flex items-center bg-white">
      <h1 className="flex items-center gap-1.5 pl-1.5 text-[15px] text-black"><PromobLogo />Promob Catalog - Start Labs</h1>
      <div className="ml-auto flex">
        <button type="button" aria-label="Minimizar" className="w-[58px] flex justify-center"><svg viewBox="0 0 14 14" className="w-3.5 h-3.5"><path d="M0 7.500h14" stroke="#000" strokeWidth="1.300" /></svg></button>
        <button type="button" aria-label="Maximizar" className="w-[58px] flex justify-center"><svg viewBox="0 0 14 14" className="w-3.5 h-3.5"><path d="M1 1h12v12H1Z" fill="none" stroke="#000" strokeWidth="1.300" /></svg></button>
        <button type="button" aria-label="Cerrar" className="w-[58px] flex justify-center"><svg viewBox="0 0 14 14" className="w-3.5 h-3.5"><path d="m.5.5 13 13M13.500.5l-13 13" stroke="#000" strokeWidth="1.200" /></svg></button>
      </div>
    </header>

    <nav className="h-[29px] pl-[17px] flex items-center gap-6 bg-gradient-to-r from-[#f0f0f0] to-[#fafafa] text-[14px] text-[#1a1a1a]">
      <button type="button" className="font-bold">Registro</button>
      {MENU.map(m => <button key={m} type="button">{m}</button>)}
    </nav>

    <Toolbar />

    <main className="flex-1 flex">
      <SideTabs />
      <div className="flex-1 min-w-0 flex flex-col">
        <div className="h-[31px] pl-[5px]">
          <button type="button" className="h-7 px-1.5 flex items-center gap-1.5 bg-[#f0f0f0] border border-t-0 border-[#7a7a7a] rounded-b text-[15px] text-[#6d6d6d]"><ModulesIcon />Módulos</button>
        </div>
        <div className="flex-1 flex">
          <Viewport />
          <PropertiesPanel />
        </div>
        <div className="h-[31px] pl-[5px] flex items-end text-[14px] text-[#6d6d6d]">
          <button type="button" className="h-[26px] pl-[5px] pr-[7px] flex items-center gap-1 bg-[#f0f0f0] border border-b-0 border-[#7a7a7a] rounded-t"><ModulesIcon a="#3fa06b" b="#e04848" />Materiales</button>
          <button type="button" className="h-[26px] pl-[3px] pr-[7px] flex items-center gap-1.5 bg-[#f0f0f0] border border-b-0 border-[#7a7a7a] rounded-t"><SwapIcon />Substituir</button>
        </div>
      </div>
    </main>

    <StatusBar />
  </div>
);

export default App;
